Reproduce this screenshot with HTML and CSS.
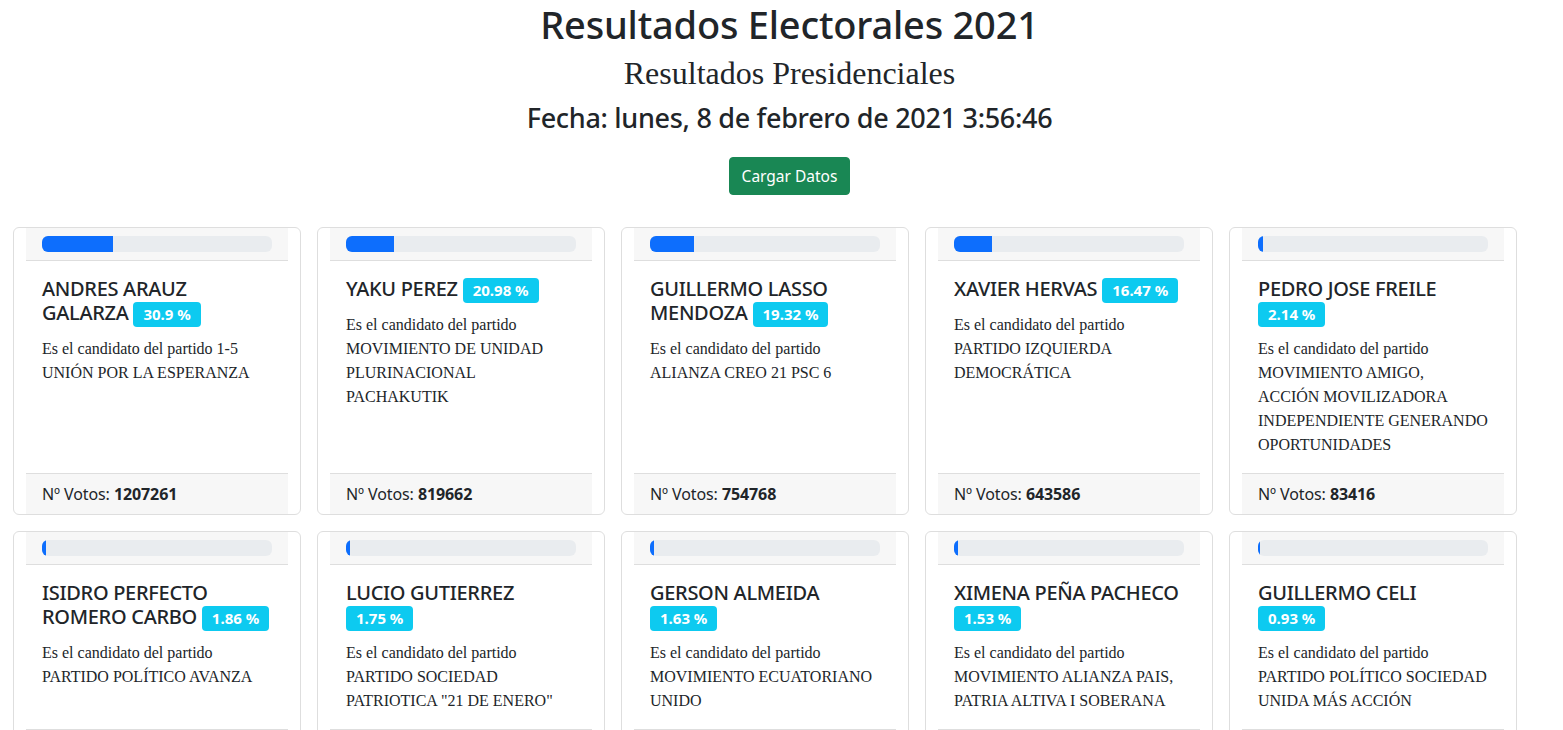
FILE: index.html
```html
<!DOCTYPE html>
<html lang="es">
<head>
<meta charset="utf-8">
<title>Resultados Electorales 2021</title>
<link rel="stylesheet" href="styles.css">
</head>
<body>
<header class="header">
  <h1 class="title">Resultados Electorales 2021</h1>
  <h2 class="subtitle">Resultados Presidenciales</h2>
  <h3 class="date">Fecha: lunes, 8 de febrero de 2021 3:56:46</h3>
  <button class="btn-load" type="button">Cargar Datos</button>
</header>
<main class="grid">
  <div class="card">
    <div class="card-header"><div class="progress"><div class="progress-bar" style="width:30.9%"></div></div></div>
    <div class="card-body">
      <h5 class="card-title">ANDRES ARAUZ GALARZA <span class="badge">30.9 %</span></h5>
      <p class="card-text">Es el candidato del partido 1-5 UNIÓN POR LA ESPERANZA</p>
    </div>
    <div class="card-footer">Nº Votos: <b>1207261</b></div>
  </div>
  <div class="card">
    <div class="card-header"><div class="progress"><div class="progress-bar" style="width:20.98%"></div></div></div>
    <div class="card-body">
      <h5 class="card-title">YAKU PEREZ <span class="badge">20.98 %</span></h5>
      <p class="card-text">Es el candidato del partido MOVIMIENTO DE UNIDAD PLURINACIONAL PACHAKUTIK</p>
    </div>
    <div class="card-footer">Nº Votos: <b>819662</b></div>
  </div>
  <div class="card">
    <div class="card-header"><div class="progress"><div class="progress-bar" style="width:19.32%"></div></div></div>
    <div class="card-body">
      <h5 class="card-title">GUILLERMO LASSO MENDOZA <span class="badge">19.32 %</span></h5>
      <p class="card-text">Es el candidato del partido ALIANZA CREO 21 PSC 6</p>
    </div>
    <div class="card-footer">Nº Votos: <b>754768</b></div>
  </div>
  <div class="card">
    <div class="card-header"><div class="progress"><div class="progress-bar" style="width:16.47%"></div></div></div>
    <div class="card-body">
      <h5 class="card-title">XAVIER HERVAS <span class="badge">16.47 %</span></h5>
      <p class="card-text">Es el candidato del partido PARTIDO IZQUIERDA DEMOCRÁTICA</p>
    </div>
    <div class="card-footer">Nº Votos: <b>643586</b></div>
  </div>
  <div class="card">
    <div class="card-header"><div class="progress"><div class="progress-bar" style="width:2.14%"></div></div></div>
    <div class="card-body">
      <h5 class="card-title">PEDRO JOSE FREILE <span class="badge">2.14 %</span></h5>
      <p class="card-text">Es el candidato del partido MOVIMIENTO AMIGO, ACCIÓN MOVILIZADORA INDEPENDIENTE GENERANDO OPORTUNIDADES</p>
    </div>
    <div class="card-footer">Nº Votos: <b>83416</b></div>
  </div>
  <div class="card">
    <div class="card-header"><div class="progress"><div class="progress-bar" style="width:1.86%"></div></div></div>
    <div class="card-body">
      <h5 class="card-title">ISIDRO PERFECTO ROMERO CARBO <span class="badge">1.86 %</span></h5>
      <p class="card-text">Es el candidato del partido PARTIDO POLÍTICO AVANZA</p>
    </div>
    <div class="card-footer">Nº Votos: <b>72340</b></div>
  </div>
  <div class="card">
    <div class="card-header"><div class="progress"><div class="progress-bar" style="width:1.75%"></div></div></div>
    <div class="card-body">
      <h5 class="card-title">LUCIO GUTIERREZ <span class="badge">1.75 %</span></h5>
      <p class="card-text">Es el candidato del partido PARTIDO SOCIEDAD PATRIOTICA "21 DE ENERO"</p>
    </div>
    <div class="card-footer">Nº Votos: <b>68167</b></div>
  </div>
  <div class="card">
    <div class="card-header"><div class="progress"><div class="progress-bar" style="width:1.63%"></div></div></div>
    <div class="card-body">
      <h5 class="card-title">GERSON ALMEIDA <span class="badge">1.63 %</span></h5>
      <p class="card-text">Es el candidato del partido MOVIMIENTO ECUATORIANO UNIDO</p>
    </div>
    <div class="card-footer">Nº Votos: <b>63550</b></div>
  </div>
  <div class="card">
    <div class="card-header"><div class="progress"><div class="progress-bar" style="width:1.53%"></div></div></div>
    <div class="card-body">
      <h5 class="card-title">XIMENA PEÑA PACHECO <span class="badge">1.53 %</span></h5>
      <p class="card-text">Es el candidato del partido MOVIMIENTO ALIANZA PAIS, PATRIA ALTIVA I SOBERANA</p>
    </div>
    <div class="card-footer">Nº Votos: <b>59712</b></div>
  </div>
  <div class="card">
    <div class="card-header"><div class="progress"><div class="progress-bar" style="width:0.93%"></div></div></div>
    <div class="card-body">
      <h5 class="card-title">GUILLERMO CELI <span class="badge">0.93 %</span></h5>
      <p class="card-text">Es el candidato del partido PARTIDO POLÍTICO SOCIEDAD UNIDA MÁS ACCIÓN</p>
    </div>
    <div class="card-footer">Nº Votos: <b>36298</b></div>
  </div>
</main>
</body>
</html>
```
FILE: styles.css
```css
* { box-sizing: border-box; }
html, body { margin: 0; padding: 0; background: #fff; }
body {
  font-family: "Noto Sans", "Open Sans", sans-serif;
  color: #212529;
  font-size: 16px;
  line-height: 1.5;
}
.header {
  display: flex;
  flex-direction: column;
  align-items: center;
  padding-left: 16px;
}
.title {
  margin: 0;
  font-size: 38px;
  letter-spacing: -0.2px;
  font-weight: 500;
  line-height: 48px;
}
.subtitle {
  margin: 5.5px 0 0;
  font-family: "Liberation Serif", "Times New Roman", serif;
  font-size: 32px;
  font-weight: 400;
  line-height: 38px;
}
.date {
  margin: 9px 0 0;
  font-size: 27px;
  letter-spacing: -0.3px;
  font-weight: 500;
  line-height: 34px;
}
.btn-load {
  margin-top: 22.5px;
  font-family: inherit;
  font-size: 15.5px;
  line-height: 24px;
  padding: 6px 12px;
  color: #fff;
  background: #198754;
  border: 1px solid #198754;
  border-radius: 4px;
}
.grid {
  display: grid;
  grid-template-columns: repeat(5, 288px);
  gap: 16px;
  padding-left: 13px;
  margin-top: 32px;
}
.card {
  display: flex;
  flex-direction: column;
  border: 1px solid #dedede;
  border-radius: 6px;
  padding: 0 12px;
  background: #fff;
}
.card-header {
  background: #f7f7f7;
  padding: 8px 16px;
  border-bottom: 1px solid #dedede;
}
.progress {
  height: 16px;
  background: #e9ecef;
  border-radius: 6px;
  overflow: hidden;
  display: flex;
}
.progress-bar {
  background: #0d6efd;
  height: 100%;
}
.card-body {
  flex: 1 1 auto;
  padding: 16px;
}
.card-title {
  margin: 0 0 10px;
  font-size: 20px;
  letter-spacing: -0.3px;
  font-weight: 500;
  line-height: 24px;
}
.badge {
  display: inline-block;
  background: #0dcaf0;
  color: #fff;
  font-size: 15px;
  letter-spacing: 0;
  font-weight: 700;
  line-height: 15px;
  padding: 5px 10px;
  border-radius: 4px;
  vertical-align: baseline;
}
.card-text {
  margin: 0;
  font-family: "Liberation Serif", "Times New Roman", serif;
  font-size: 16px;
  line-height: 24px;
}
.card-footer {
  background: #f7f7f7;
  border-top: 1px solid #dedede;
  padding: 8px 16px;
  font-size: 16px;
  letter-spacing: -0.1px;
  line-height: 24px;
}
.card-footer b { font-weight: 700; }
```
